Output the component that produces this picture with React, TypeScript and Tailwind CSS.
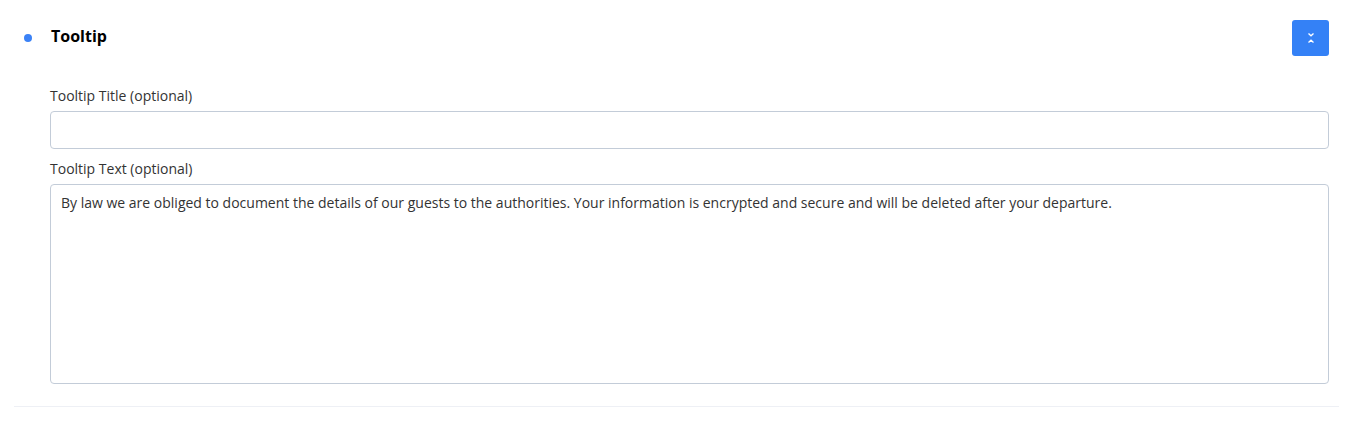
import React from "react";

export default function App() {
  return (
    <div className="w-[1351px] h-[421px] bg-white" style={{ fontFamily: '"Open Sans", sans-serif' }}>
      <div className="pl-[14px] pr-[12px] pt-[20px]">
        <div className="pb-[22px] border-b border-[#eef0f5]">
          <div className="flex items-center justify-between h-[36px] pr-[10px]">
            <div className="flex items-center">
              <span className="ml-[10px] w-[8px] h-[8px] rounded-full bg-[#3b82f6]" />
              <span className="ml-[19px] mb-[4px] text-[16px] font-bold text-black leading-none">Tooltip</span>
            </div>
            <button className="w-[37px] h-[36px] rounded-[3px] bg-[#3481f6] flex items-center justify-center">
              <svg width="8" height="12" viewBox="0 0 8 12" fill="none" stroke="white" strokeWidth="1.3">
                <path d="M1.5 1.5 L4 3.8 L6.5 1.5" />
                <path d="M1.5 10.5 L4 8.2 L6.5 10.5" />
              </svg>
            </button>
          </div>
          <div className="pl-[36px] pr-[10px] mt-[30px]">
            <label className="block text-[14px] leading-[20px] text-[#333]">Tooltip Title (optional)</label>
            <div className="mt-[5px] h-[38px] border border-[#c3ccd8] rounded-[4px]" />
            <label className="block mt-[10px] text-[14px] leading-[20px] text-[#333]">Tooltip Text (optional)</label>
            <div className="mt-[5px] h-[200px] border border-[#c3ccd8] rounded-[4px] px-[10px] pt-[8px] text-[14px] leading-[20px] text-[#333]">
              By law we are obliged to document the details of our guests to the authorities. Your information is encrypted and secure and will be deleted after your departure.
            </div>
          </div>
        </div>
      </div>
    </div>
  );
}
